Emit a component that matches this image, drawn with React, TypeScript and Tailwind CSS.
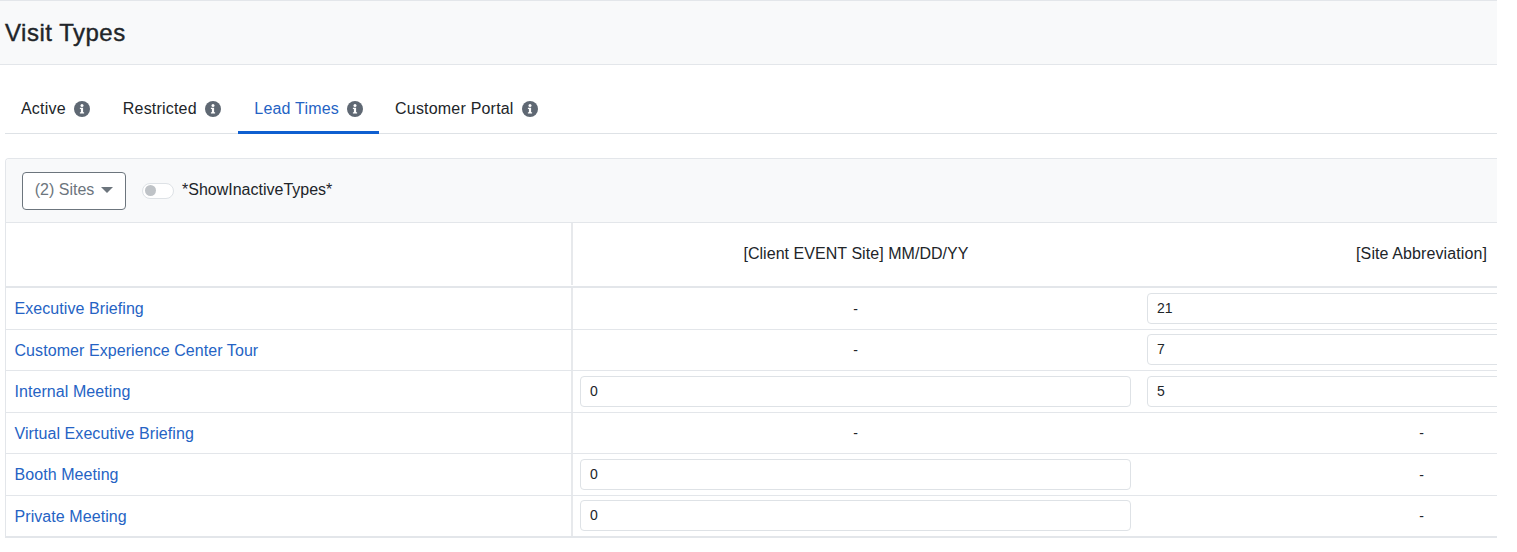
const font = { fontFamily: '"Liberation Sans", Arial, sans-serif' };

function InfoIcon() {
  return (
    <svg width="16" height="16" viewBox="0 0 16 16" className="shrink-0">
      <circle cx="8" cy="8" r="8" fill="#5f6873" />
      <circle cx="8" cy="4.4" r="1.5" fill="#fff" />
      <path d="M5.9 6.7h3.2v4.6h1v1.3H5.9v-1.3h1v-3.3h-1z" fill="#fff" />
    </svg>
  );
}

function Tab({ label, active, className }: { label: string; active?: boolean; className: string }) {
  return (
    <div
      className={
        active
          ? `flex h-[49px] items-center gap-[8px] border-b-[3px] border-[#0f5fd0] pt-[2px] text-[#2563c4] ${className}`
          : `flex h-[49px] items-center gap-[8px] pt-[1px] text-[#212529] ${className}`
      }
    >
      <span>{label}</span>
      <InfoIcon />
    </div>
  );
}

function Field({ value }: { value: string }) {
  return (
    <div className="flex h-[31px] w-full items-center rounded-[4px] border border-[#dee2e6] bg-white pl-[9px] text-[14px] text-[#212529]">
      {value}
    </div>
  );
}

function Cell({ value, last }: { value: string | null; last?: boolean }) {
  const base = last ? "w-[565px] pl-[8px] pr-[8px]" : "w-[568px] border-l-2 border-[#e7e9ec] pl-[7px] pr-[8px]";
  if (value === null) {
    return <div className={`flex h-full shrink-0 items-center justify-center pt-[1.5px] text-[14px] text-[#212529] ${base}`}>-</div>;
  }
  return (
    <div className={`flex h-full shrink-0 items-center ${base}`}>
      <Field value={value} />
    </div>
  );
}

const rows: { name: string; a: string | null; b: string | null }[] = [
  { name: "Executive Briefing", a: null, b: "21" },
  { name: "Customer Experience Center Tour", a: null, b: "7" },
  { name: "Internal Meeting", a: "0", b: "5" },
  { name: "Virtual Executive Briefing", a: null, b: null },
  { name: "Booth Meeting", a: "0", b: null },
  { name: "Private Meeting", a: "0", b: null },
];

export default function App() {
  return (
    <div className="h-[552px] w-[1517px] overflow-hidden bg-white" style={font}>
      <div className="w-[1497px]">
        <div className="flex h-[65px] items-center border-y border-[#e3e6ea] bg-[#f8f9fa] pl-[5px] text-[24px] tracking-[0.5px] text-[#212529] [-webkit-text-stroke:0.4px_#212529]">
          Visit Types
        </div>

        <div className="ml-[5px] mt-[20px] flex h-[49px] items-end border-b border-[#dee2e6] text-[16px] tracking-[0.2px]">
          <Tab label="Active" className="pl-[16px] pr-[16.5px]" />
          <Tab label="Restricted" className="pl-[16.5px] pr-[17px]" />
          <Tab label="Lead Times" active className="mb-[-1px] pl-[16.5px] pr-[16px]" />
          <Tab label="Customer Portal" className="px-[16px]" />
        </div>

        <div className="ml-[5px] mt-[24px] overflow-hidden rounded-tl-[4px] border-l border-t border-[#e3e6ea]">
          <div className="flex h-[64px] items-center border-b border-[#e3e6ea] bg-[#f8f9fa] pl-[16px]">
            <div className="flex h-[38px] w-[104px] items-center justify-center gap-[7px] rounded-[4px] border border-[#6c757d] bg-white pb-[1px] text-[16px] text-[#6c757d]">
              <span>(2) Sites</span>
              <span className="h-0 w-0 border-x-[6px] border-t-[6px] border-x-transparent border-t-[#6c757d]" />
            </div>
            <div className="ml-[16px] flex h-[16px] w-[32px] items-center rounded-full border border-[#dee2e6] bg-white pl-[2px]">
              <span className="h-[11px] w-[11px] rounded-full bg-[#bfc3c7]" />
            </div>
            <span className="mb-[2px] ml-[8px] text-[16px] text-[#212529]">*ShowInactiveTypes*</span>
          </div>

          <div className="flex h-[65px] items-center border-b-2 border-[#e3e6ea] pb-[1px] text-[16px] tracking-[0.05px] text-[#212529]">
            <div className="h-full w-[565px] shrink-0" />
            <div className="flex h-full w-[568px] shrink-0 items-center justify-center border-l-2 border-[#e7e9ec]">
              [Client EVENT Site] MM/DD/YY
            </div>
            <div className="flex h-full w-[565px] shrink-0 items-center justify-center tracking-[0.1px]">[Site Abbreviation]</div>
          </div>

          {rows.map((r, i) => (
            <div
              key={r.name}
              className={
                i === rows.length - 1
                  ? "flex h-[41.6px] items-center border-b-2 border-[#e3e6ea]"
                  : "flex h-[41.6px] items-center border-b border-[#e3e6ea]"
              }
            >
              <div className="w-[565px] shrink-0 pl-[8.5px] pt-[1.5px] text-[16px] tracking-[0.07px] text-[#2563c4]">{r.name}</div>
              <Cell value={r.a} />
              <Cell value={r.b} last />
            </div>
          ))}
        </div>
      </div>
    </div>
  );
}
